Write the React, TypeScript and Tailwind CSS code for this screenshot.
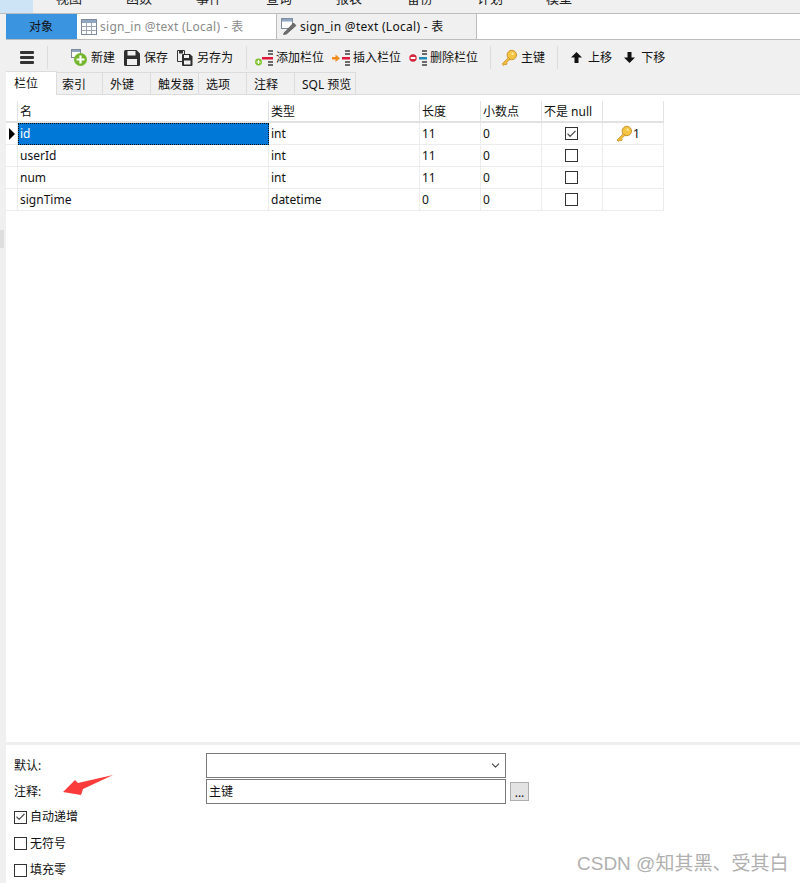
import { ReactNode } from 'react';
import { Check, ChevronDown } from 'lucide-react';

const MENU = [
  { label: '视图', w: 'w-[70px]' },
  { label: '函数', w: 'w-[70px]' },
  { label: '事件', w: 'w-[70px]' },
  { label: '查询', w: 'w-[70px]' },
  { label: '报表', w: 'w-[71px]' },
  { label: '备份', w: 'w-[70px]' },
  { label: '计划', w: 'w-[69px]' },
  { label: '模型', w: 'w-[60px]' },
];

const TABS = [
  { label: '索引', w: 'w-[46px] pl-[5px]' },
  { label: '外键', w: 'w-[48px] pl-[7px]' },
  { label: '触发器', w: 'w-[48px] pl-[7px]' },
  { label: '选项', w: 'w-[48px] pl-[7px]' },
  { label: '注释', w: 'w-[48px] pl-[7px]' },
  { label: 'SQL 预览', w: 'w-[61px] pl-[7px]' },
];

const ROWS = [
  { name: 'id', type: 'int', len: '11', dec: '0', notNull: true, key: true },
  { name: 'userId', type: 'int', len: '11', dec: '0', notNull: false, key: false },
  { name: 'num', type: 'int', len: '11', dec: '0', notNull: false, key: false },
  { name: 'signTime', type: 'datetime', len: '0', dec: '0', notNull: false, key: false },
];

const COLS = 'grid grid-cols-[12px_251px_151px_61px_61px_61px_61px]';
const cell = 'border-r border-b border-[#ececec] pl-[2px] flex items-center';
const head = 'border-r border-[#e2e2e2] pl-[2px] pt-[2px] flex items-center';

function KeyIcon({ size = 18 }: { size?: number }) {
  return (
    <svg width={size} height={size} viewBox="0 0 18 18">
      <circle cx="11.8" cy="6" r="4.7" fill="#f4c542" stroke="#c9932a" strokeWidth="1" />
      <path d="M8.5 8.5 L2 15 L3.6 16.5 L5 15.2 L6 16 L7.2 14.8 L6.4 13.8 L10.2 10.2 Z" fill="#f0bc3c" stroke="#c9932a" strokeWidth="0.8" />
      <circle cx="12.6" cy="4.8" r="1.2" fill="#fbe9a8" />
    </svg>
  );
}

function ColumnBars({ children }: { children: ReactNode }) {
  return (
    <svg width="20" height="16" viewBox="0 0 20 16">
      <rect x="13" y="0" width="5" height="2" fill="#6b6b6b" />
      <rect x="13" y="3" width="5" height="2" fill="#6b6b6b" />
      <rect x="13" y="11" width="5" height="2" fill="#6b6b6b" />
      <rect x="13" y="14" width="5" height="2" fill="#6b6b6b" />
      {children}
    </svg>
  );
}

function ToolItem({ icon, label, className }: { icon: ReactNode; label: string; className?: string }) {
  return (
    <div className={`flex items-center ${className ?? ''}`}>
      {icon}
      <span>{label}</span>
    </div>
  );
}

function Sep() {
  return <div className="w-px h-[23px] bg-[#dcdcdc]" />;
}

function Box({ checked }: { checked?: boolean }) {
  return (
    <div className="w-[13px] h-[13px] border border-[#333] bg-white flex items-center justify-center">
      {checked && <Check size={12} strokeWidth={2.5} className="text-[#4a4a4a]" />}
    </div>
  );
}

export default function App() {
  return (
    <div className="relative w-[800px] h-[883px] overflow-hidden bg-[#f0f0f0] text-[12px] text-[#111] flex flex-col font-['Noto_Sans','Noto_Sans_CJK_SC',sans-serif]">
      {/* menu bar, cut off at the top of the picture */}
      <div className="h-[14px] shrink-0 flex items-end overflow-hidden border-b border-[#bdbdbd] bg-[#f0f0f0]">
        <div className="w-[33px] h-[13px] bg-[#cde4f7] shrink-0" />
        <div className="flex pl-[23px] pb-[5px] text-[13px] leading-[20px] text-[#222]">
          {MENU.map((m) => (
            <span key={m.label} className={`${m.w} shrink-0`}>
              {m.label}
            </span>
          ))}
        </div>
      </div>

      <div className="flex-1 flex min-h-0">
        {/* left edge */}
        <div className="w-[6px] shrink-0 flex flex-col">
          <div className="h-[216px]" />
          <div className="w-[4px] h-[18px] bg-[#dedede]" />
        </div>

        <div className="flex-1 min-w-0 flex flex-col">
          {/* document tabs */}
          <div className="h-[26px] shrink-0 flex border-b border-[#bdbdbd]">
            <div className="w-[71px] bg-[#3b94e0] flex items-center justify-center pr-[1px]">对象</div>
            <div className="w-[200px] bg-white flex items-center pl-[4px] gap-[3px] text-[#8a8a8a] border-r border-[#bdbdbd] tracking-[0.28px]">
              <svg width="16" height="16" viewBox="0 0 16 16">
                <rect x="0.5" y="0.5" width="15" height="15" fill="#fff" stroke="#7d8a99" />
                <rect x="1" y="1" width="14" height="3" fill="#8fa6c2" />
                <path d="M1 7.5H15M1 11.5H15M5.5 4V15M10.5 4V15" stroke="#9aa5b1" />
              </svg>
              <span>sign_in @text (Local) - 表</span>
            </div>
            <div className="w-[200px] flex items-center pl-[4px] gap-[3px] border-r border-[#bdbdbd] tracking-[0.28px]">
              <svg width="16" height="17" viewBox="0 0 16 17">
                <rect x="0.5" y="0.5" width="11" height="10" fill="#fff" stroke="#7d8a99" />
                <rect x="1" y="1" width="10" height="2.5" fill="#8fa6c2" />
                <path d="M3 15 L12.5 5 L15 7.5 L5.5 16 L2.5 16.5 Z" fill="#6e6e6e" stroke="#444" strokeWidth="0.6" />
              </svg>
              <span>sign_in @text (Local) - 表</span>
            </div>
            <div className="flex-1 bg-white" />
          </div>

          {/* toolbar */}
          <div className="h-[32px] shrink-0 flex items-center pt-[3px]">
            <div className="w-[41px] flex justify-center">
              <div className="w-[14px] flex flex-col gap-[2px]">
                <div className="h-[3px] bg-[#333] rounded-[1px]" />
                <div className="h-[3px] bg-[#333] rounded-[1px]" />
                <div className="h-[3px] bg-[#333] rounded-[1px]" />
              </div>
            </div>
            <Sep />
            <ToolItem
              className="ml-[23px] gap-[4px]"
              label="新建"
              icon={
                <svg width="16" height="17" viewBox="0 0 16 17">
                  <rect x="0.5" y="0.5" width="9" height="8" fill="#fff" stroke="#7d8a99" />
                  <rect x="1" y="1" width="8" height="2" fill="#8fa6c2" />
                  <circle cx="9.5" cy="10.5" r="6.5" fill="#74b72e" />
                  <path d="M9.5 6.5V14.5M5.5 10.5H13.5" stroke="#fff" strokeWidth="2.2" />
                </svg>
              }
            />
            <ToolItem
              className="ml-[9px] gap-[4px]"
              label="保存"
              icon={
                <svg width="16" height="16" viewBox="0 0 16 16">
                  <path d="M0 1.5 Q0 0 1.5 0 H12.5 L16 3.5 V14.5 Q16 16 14.5 16 H1.5 Q0 16 0 14.5 Z" fill="#2e2e2e" />
                  <rect x="3.5" y="1" width="8" height="4.5" fill="#f0f0f0" />
                  <rect x="3" y="9" width="10" height="6" fill="#f0f0f0" />
                </svg>
              }
            />
            <ToolItem
              className="ml-[9px] gap-[4px]"
              label="另存为"
              icon={
                <svg width="16" height="16" viewBox="0 0 16 16">
                  <path d="M0.5 0.5 H7.5 V11.5 H0.5 Z" fill="#f0f0f0" stroke="#333" />
                  <rect x="2" y="0.5" width="4" height="3" fill="#333" />
                  <path d="M5 5 Q5 4 6 4 H13 L15.5 6.5 V15 Q15.5 16 14.5 16 H6 Q5 16 5 15 Z" fill="#2e2e2e" />
                  <rect x="7" y="5" width="5" height="3" fill="#f0f0f0" />
                  <rect x="7" y="10.5" width="6.5" height="4" fill="#f0f0f0" />
                </svg>
              }
            />
            <div className="ml-[13px]">
              <Sep />
            </div>
            <ToolItem
              className="ml-[8px] gap-[1px]"
              label="添加栏位"
              icon={
                <ColumnBars>
                  <rect x="7" y="7" width="11" height="2.5" fill="#e0173a" />
                  <circle cx="3.5" cy="12" r="3.4" fill="#7ec02a" />
                  <path d="M3.5 10V14M1.5 12H5.5" stroke="#fff" strokeWidth="1.2" />
                </ColumnBars>
              }
            />
            <ToolItem
              className="ml-[8px] gap-[1px]"
              label="插入栏位"
              icon={
                <ColumnBars>
                  <rect x="10" y="7" width="8" height="2.5" fill="#e0173a" />
                  <path d="M0 7H3.5V4.5L8 8.2L3.5 12V9.5H0Z" fill="#f28a1c" />
                </ColumnBars>
              }
            />
            <ToolItem
              className="ml-[8px] gap-[1px]"
              label="删除栏位"
              icon={
                <ColumnBars>
                  <rect x="10" y="7" width="8" height="2.5" fill="#1f8bb5" />
                  <circle cx="4" cy="8" r="3.7" fill="#d4263a" />
                  <rect x="1.7" y="7" width="4.6" height="2" fill="#fff" />
                </ColumnBars>
              }
            />
            <div className="ml-[12px]">
              <Sep />
            </div>
            <ToolItem className="ml-[9px] gap-[3px]" label="主键" icon={<KeyIcon />} />
            <div className="ml-[12px]">
              <Sep />
            </div>
            <ToolItem
              className="ml-[13px] gap-[6px]"
              label="上移"
              icon={
                <svg width="11" height="11" viewBox="0 0 11 11">
                  <path d="M5.5 0 L11 5.5 H7.5 V11 H3.5 V5.5 H0 Z" fill="#111" />
                </svg>
              }
            />
            <ToolItem
              className="ml-[12px] gap-[6px]"
              label="下移"
              icon={
                <svg width="11" height="11" viewBox="0 0 11 11">
                  <path d="M5.5 11 L11 5.5 H7.5 V0 H3.5 V5.5 H0 Z" fill="#111" />
                </svg>
              }
            />
          </div>

          {/* property tabs */}
          <div className="h-[23px] shrink-0 flex items-end">
            <div className="w-[51px] h-[24px] bg-white border-t border-r border-[#dcdcdc] flex items-center pl-[8px]">
              栏位
            </div>
            {TABS.map((t) => (
              <div
                key={t.label}
                className={`${t.w} h-[23px] border-t border-r border-b border-[#dcdcdc] flex items-center shrink-0 pt-[3px]`}
              >
                {t.label}
              </div>
            ))}
            <div className="flex-1 h-[1px] bg-[#dcdcdc]" />
          </div>

          {/* field grid */}
          <div className="flex-1 min-h-0 bg-white pt-[6px]">
            <div className={`${COLS} w-[658px] h-[22px] border-b-2 border-[#e2e2e2]`}>
              <div className="border-r border-[#e2e2e2]" />
              <div className={head}>名</div>
              <div className={head}>类型</div>
              <div className={head}>长度</div>
              <div className={head}>小数点</div>
              <div className={head}>不是 null</div>
              <div className="border-r border-[#e2e2e2]" />
            </div>
            {ROWS.map((r, i) => (
              <div key={r.name} className={`${COLS} w-[658px] h-[22px]`}>
                <div className="border-r border-b border-[#ececec] flex items-center pl-[3px]">
                  {i === 0 && <div className="w-0 h-0 border-y-[6px] border-y-transparent border-l-[6px] border-l-black" />}
                </div>
                {i === 0 ? (
                  <div className="bg-[#0078d7] text-white pl-[1px] flex items-center border border-dotted border-[#0b0b0b]">
                    {r.name}
                  </div>
                ) : (
                  <div className={cell}>{r.name}</div>
                )}
                <div className={cell}>{r.type}</div>
                <div className={cell}>{r.len}</div>
                <div className={cell}>{r.dec}</div>
                <div className={`${cell} justify-center !pl-0 pr-[1px]`}>
                  <Box checked={r.notNull} />
                </div>
                <div className={`${cell} !pl-[12px]`}>
                  {r.key && (
                    <>
                      <KeyIcon />
                      <span>1</span>
                    </>
                  )}
                </div>
              </div>
            ))}
          </div>

          {/* column options */}
          <div className="h-[138px] shrink-0 mt-[3px] bg-white pl-[8px] pt-[8px]">
            <div className="flex items-center h-[25px]">
              <span className="w-[192px]">默认:</span>
              <div className="w-[300px] h-full border border-[#7a7a7a] flex items-center justify-end pr-[3px]">
                <ChevronDown size={13} className="text-[#444]" />
              </div>
            </div>
            <div className="flex items-center h-[25px] mt-[1px]">
              <span className="w-[192px]">注释:</span>
              <div className="w-[300px] h-full border border-[#7a7a7a] flex items-center pl-[2px]">主键</div>
              <div className="ml-[4px] w-[19px] h-[19px] bg-[#e3e3e3] border border-[#adadad] flex items-end justify-center leading-[15px]">
                ...
              </div>
            </div>
            <div className="flex flex-col">
              {[
                { label: '自动递增', on: true },
                { label: '无符号', on: false },
                { label: '填充零', on: false },
              ].map((c) => (
                <div key={c.label} className="h-[26.5px] flex items-center gap-[3px]">
                  <Box checked={c.on} />
                  <span>{c.label}</span>
                </div>
              ))}
            </div>
          </div>
        </div>
      </div>

      {/* annotation arrow */}
      <svg className="absolute left-[60px] top-[772px]" width="56" height="26" viewBox="0 0 56 26">
        <path d="M3 20 L15 8 L18 11 L53 3 L23 17 L21 23 Z" fill="#fb3b3b" />
      </svg>

      {/* watermark */}
      <div className="absolute left-[577px] top-[850px] text-[19px] leading-[28px] text-[#b0b0b0] font-['Liberation_Sans','Noto_Sans_CJK_SC',sans-serif]">
        CSDN @知其黑、受其白
      </div>
    </div>
  );
}
